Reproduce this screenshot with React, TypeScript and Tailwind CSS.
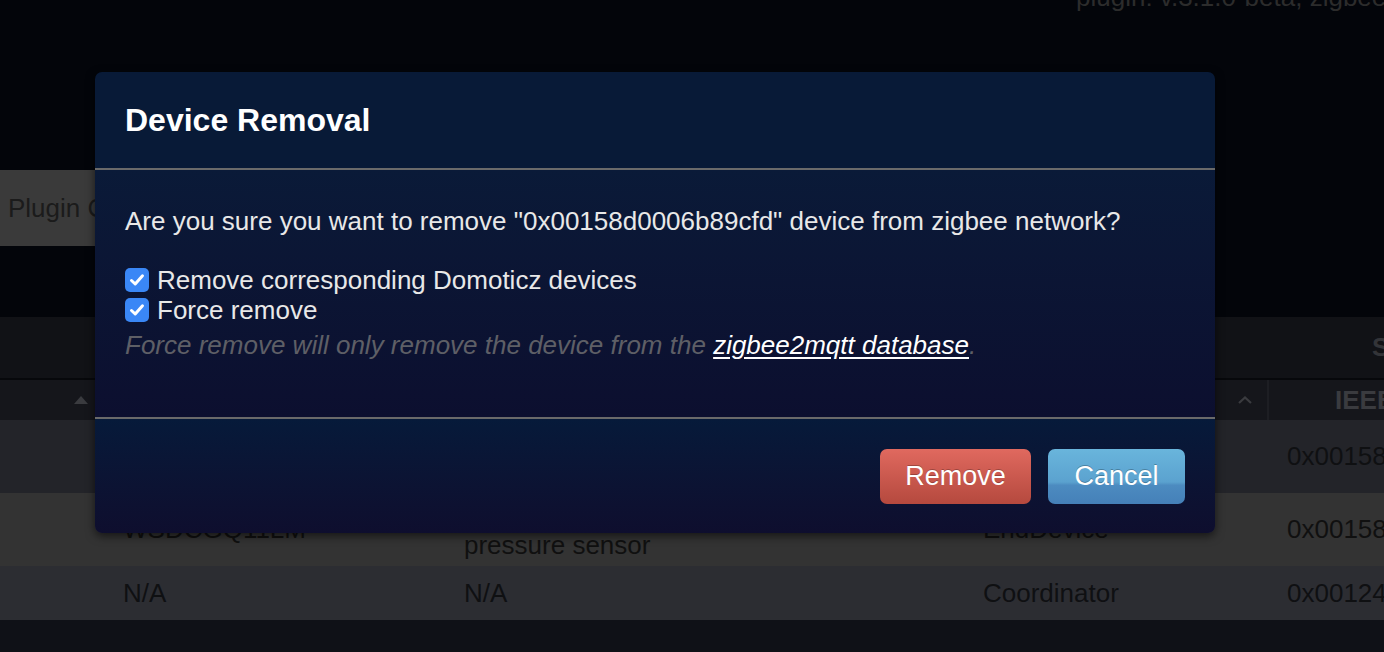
import React from "react";

function Check() {
  return (
    <span className="flex h-[24px] w-[24px] shrink-0 items-center justify-center rounded-[5px] bg-[#3a87f6]">
      <svg width="18" height="18" viewBox="0 0 18 18" fill="none">
        <path d="M3.5 9.5 L7.2 13 L14.5 4.8" stroke="white" strokeWidth="3" strokeLinecap="round" strokeLinejoin="round" />
      </svg>
    </span>
  );
}

export default function App() {
  return (
    <div className="relative flex h-[652px] w-[1384px] flex-col overflow-hidden bg-[#03050a] font-['Liberation_Sans',Arial,sans-serif] text-[26px]">
      {/* background page */}
      <div className="h-[170px] shrink-0 overflow-hidden">
        <div className="mt-[-18px] whitespace-nowrap pl-[1076px] leading-[30px] text-[#2c2c2c]">
          plugin: v.3.1.0-beta, zigbee2mqtt: 1.21.0
        </div>
      </div>
      <div className="flex h-[76px] shrink-0">
        <div className="flex w-[180px] items-center bg-[#3a3a3a] pl-[8px] whitespace-nowrap text-[#1b1b1b]">Plugin Configuration</div>
      </div>
      <div className="h-[71px] shrink-0" />
      <div className="flex h-[61px] shrink-0 items-center overflow-hidden bg-[#111216] pl-[1372px] font-bold whitespace-nowrap text-[#333438]">
        Show
      </div>
      <div className="h-[2px] shrink-0 bg-[#07080b]" />
      <div className="grid h-[40px] shrink-0 grid-cols-[103px_341px_519px_304px_1fr] bg-[#15161b] text-[#3a3b3f]">
        <div className="flex items-center justify-end pr-[14px]">
          <svg width="16" height="10" viewBox="0 0 16 10"><path d="M8 1 L15 9 L1 9 Z" fill="#3a3b3f" /></svg>
        </div>
        <div />
        <div />
        <div className="flex items-center justify-end pr-[14px]">
          <svg width="16" height="10" viewBox="0 0 16 10" fill="none"><path d="M2 8 L8 2.5 L14 8" stroke="#3a3b3f" strokeWidth="2.2" /></svg>
        </div>
        <div className="flex items-center overflow-hidden border-l-2 border-[#1d1e23] pl-[66px] font-bold whitespace-nowrap">IEEE address</div>
      </div>
      <div className="grid h-[73px] shrink-0 grid-cols-[103px_341px_519px_304px_1fr] items-center bg-[#232429] text-[#0f1012]">
        <div />
        <div className="pl-[20px]">lumi.weather</div>
        <div className="pl-[20px]">Temperature sensor</div>
        <div className="pl-[20px]">EndDevice</div>
        <div className="overflow-hidden pl-[20px] whitespace-nowrap">0x00158d0006b89cfd</div>
      </div>
      <div className="grid h-[73px] shrink-0 grid-cols-[103px_341px_519px_304px_1fr] items-center bg-[#333333] text-[#101010]">
        <div />
        <div className="pl-[20px]">WSDCGQ11LM</div>
        <div className="pl-[20px] leading-[30px]">Aqara temperature, humidity and<br />pressure sensor</div>
        <div className="pl-[20px]">EndDevice</div>
        <div className="overflow-hidden pl-[20px] whitespace-nowrap">0x00158d0006b89cfd</div>
      </div>
      <div className="grid h-[54px] shrink-0 grid-cols-[103px_341px_519px_304px_1fr] items-center bg-[#2c2d32] text-[#0f1012]">
        <div />
        <div className="pl-[20px]">N/A</div>
        <div className="pl-[20px]">N/A</div>
        <div className="pl-[20px]">Coordinator</div>
        <div className="overflow-hidden pl-[20px] whitespace-nowrap">0x00124b0018e2a5f1</div>
      </div>
      <div className="flex-1 bg-[#0f1117]" />

      {/* modal */}
      <div className="absolute left-[95px] top-[72px] flex w-[1120px] flex-col overflow-hidden rounded-[7px] shadow-[0_3px_10px_rgba(0,0,0,0.6)]">
        <div className="flex h-[98px] items-center border-b-2 border-[#6a6a6a] bg-[#081a37] px-[30px]">
          <h3 className="text-[32px] font-bold leading-[40px] text-white">Device Removal</h3>
        </div>
        <div className="flex h-[247px] flex-col bg-gradient-to-b from-[#0a1a38] to-[#0c0f2f] px-[30px] pt-[36px] leading-[30px] text-[#e8e8e8]">
          <p>Are you sure you want to remove "0x00158d0006b89cfd" device from zigbee network?</p>
          <div className="mt-[29px] flex flex-col">
            <label className="flex h-[30px] items-center gap-[8px]">
              <Check />
              <span>Remove corresponding Domoticz devices</span>
            </label>
            <label className="flex h-[30px] items-center gap-[8px]">
              <Check />
              <span>Force remove</span>
            </label>
          </div>
          <p className="mt-[5px] italic text-[#5e5f66]">
            Force remove will only remove the device from the{" "}
            <a className="text-white underline underline-offset-[3px]">zigbee2mqtt database</a>.
          </p>
        </div>
        <div className="flex h-[116px] items-center justify-end gap-[17px] border-t-2 border-[#6a6a6a] bg-gradient-to-b from-[#061a3a] to-[#0e0e2e] pr-[30px]">
          <button className="h-[55px] w-[151px] rounded-[7px] bg-gradient-to-b from-[#e0695f] to-[#b5493e] text-[27px] text-white [text-shadow:0_-1px_0_rgba(0,0,0,0.25)]">
            Remove
          </button>
          <button className="h-[55px] w-[137px] rounded-[7px] bg-[linear-gradient(to_bottom,#69b5dc_0%,#5ba2cf_60%,#4c8bc0_66%,#4580b8_100%)] text-[27px] text-white [text-shadow:0_-1px_0_rgba(0,0,0,0.25)]">
            Cancel
          </button>
        </div>
      </div>
    </div>
  );
}
